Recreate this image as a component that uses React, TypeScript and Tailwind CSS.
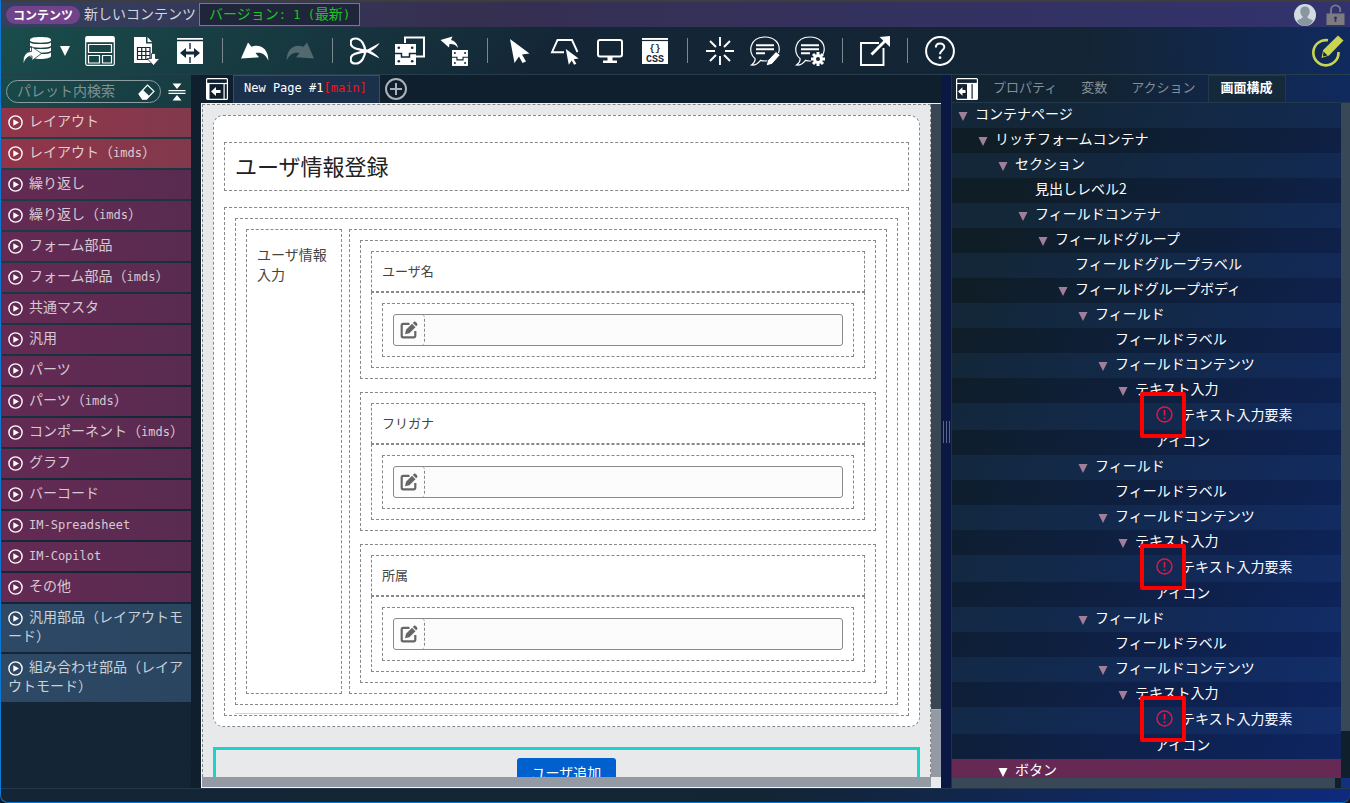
import React, { ReactNode } from "react";

const DARK = "#14283a";

/* ---------- toolbar drawings ---------- */

function Icon({ children }: { children: ReactNode }) {
  return (
    <svg viewBox="0 0 30 30" className="size-[30px] shrink-0" fill="currentColor" aria-hidden="true">
      {children}
    </svg>
  );
}

const RepositoryIcon = () => (
  <Icon>
    <path d="M7 3.500C7 .2 28 .2 28 3.500V20c0 4-21 4-21 0z" />
    <g fill="none" stroke="#194240" strokeWidth="1.300">
      <path d="M7 5.500c2 2.600 19 2.600 21 0" />
      <path d="M7 10.500c2 2.600 19 2.600 21 0" />
      <path d="M7 15.500c2 2.600 19 2.600 21 0" />
    </g>
    <path
      d="M.5 28.500C-1 20 3 15.500 8.500 15.500V10.500l10 7-9.500 7v-4.500C5 20 2.500 22 .5 28.500z"
      stroke="#194240"
      strokeWidth=".8"
    />
  </Icon>
);

const LayoutIcon = () => (
  <Icon>
    <rect x=".7" y=".7" width="28.600" height="28.600" rx="1.500" fill="none" stroke="currentColor" strokeWidth="1.200" />
    <path d="M1 1h28v5.200H1z" />
    <g fill="none" stroke="currentColor" strokeWidth="1.200">
      <path d="M3.500 8.500h23v8h-23zM3.500 19.500h11v7.500h-11zM17.500 19.500h9v7.500h-9z" />
    </g>
  </Icon>
);

const SheetIcon = () => (
  <Icon>
    <path d="M4 1h12v6.500h6V27H4z" />
    <path d="M17.500 1L22 6h-4.500z" />
    <path d="M7.500 11.500h12.500v12H7.500zM7.500 15.500H20M7.500 19.500H20M11.700 11.500v12M15.800 11.500v12" fill="none" stroke={DARK} strokeWidth="1.200" />
    <path d="M21.500 17.500h4v5h4.300L23.500 29.500l-6.300-7h4.300z" stroke={DARK} strokeWidth=".8" />
  </Icon>
);

const WidthIcon = () => (
  <Icon>
    <path d="M2 2h26v26H2z" />
    <path d="M2 4.500h26M15 7v6M15 21v6" stroke={DARK} strokeWidth="1.400" />
    <path d="M5 17l6-5v3.500h8V12l6 5-6 5v-3.500h-8V22z" fill={DARK} />
  </Icon>
);

const UndoPath = () => <path d="M1 22.500L8 6.500l3.500 4.200C21 7.500 28.500 13.500 28.300 24.500 25.500 17.500 20.500 15.800 15.500 17l3.500 4.300z" />;

const UndoIcon = () => (
  <Icon>
    <UndoPath />
  </Icon>
);

const RedoIcon = () => (
  <Icon>
    <g transform="translate(30 0) scale(-1 1)">
      <UndoPath />
    </g>
  </Icon>
);

const ScissorsIcon = () => (
  <Icon>
    <g fill="none" stroke="currentColor" strokeWidth="2.200">
      <path d="M15.500 16.500C15 9 11.500 2.500 5.500 2.500-1 2.500-.5 10 4.500 12c3.500 1.500 7 1.500 11 3.500" />
      <path d="M15.500 13.500C15 21 11.500 27.500 5.500 27.500c-6.500 0-6-7.500-1-9.500 3.500-1.500 7-1.500 11-3.500" />
    </g>
    <path d="M12 13l5.500.5L29.500 7c-1 2.500-5 6-9 8 4 2 8 5.500 9 7.500L17.500 16.500 12 17z" />
  </Icon>
);

const Part = () => (
  <g>
    <path d="M0 0h21v21H0z" />
    <g fill={DARK}>
      <circle cx="3.800" cy="3.800" r="1.300" />
      <circle cx="17.200" cy="3.800" r="1.300" />
      <circle cx="3.800" cy="17.200" r="1.300" />
      <circle cx="17.200" cy="17.200" r="1.300" />
    </g>
    <path d="M0 9.500h6.500v3.500h8V9.500H21" fill="none" stroke={DARK} strokeWidth="1.500" />
  </g>
);

const CopyIcon = () => (
  <Icon>
    <path d="M10 7V1.500h19v19h-8" fill="none" stroke="currentColor" strokeWidth="2" />
    <g transform="translate(0 8)">
      <Part />
    </g>
  </Icon>
);

const PasteIcon = () => (
  <Icon>
    <path d="M.5 4L12.500.5 11 4c4 1 6.500 4 7 8C15.500 8.500 13 7.800 9.500 8L9 11.500z" />
    <g transform="translate(12 14) scale(.76)">
      <Part />
    </g>
  </Icon>
);

const Pointer = () => <path d="M5 3l19.500 14.500-7.500 1 4 7L17.500 27 14 20.500 9.500 27z" />;

const PointerIcon = () => (
  <Icon>
    <Pointer />
  </Icon>
);

const AreaPointerIcon = () => (
  <Icon>
    <path d="M14 16.200H2L7.500 4h14.500l5.500 12" fill="none" stroke="currentColor" strokeWidth="1.900" />
    <g transform="translate(12.500 11) scale(.66)">
      <Pointer />
    </g>
  </Icon>
);

const MonitorIcon = () => (
  <Icon>
    <rect x="3" y="4" width="24" height="16.500" rx="2" fill="none" stroke="currentColor" strokeWidth="2" />
    <path d="M12.500 20h5v4.500H22V27H8v-2.500h4.500z" />
  </Icon>
);

const CssIcon = () => (
  <Icon>
    <path d="M2 2h26v26H2z" />
    <path d="M2 4.500h26" stroke={DARK} strokeWidth="1.200" />
    <text x="15" y="14.500" textAnchor="middle" fontSize="9" fontWeight="700" fontFamily="Liberation Mono" fill={DARK}>
      {"{}"}
    </text>
    <text x="15" y="25.800" textAnchor="middle" fontSize="10" fontWeight="700" fontFamily="Liberation Mono" fill={DARK}>
      CSS
    </text>
  </Icon>
);

const BurstIcon = () => (
  <Icon>
    <path
      d="M15 1v9M15 20v9M1 15h9M20 15h9M5 5l6 6M19 19l6 6M25 5l-6 6M11 19l-6 6"
      fill="none"
      stroke="currentColor"
      strokeWidth="1.900"
    />
  </Icon>
);

const Balloon = () => (
  <g fill="none" stroke="currentColor">
    <path d="M5 22.500C-2.500 17-.5 1 15 1c19 0 19 24 0 24-1.500 0-3-.3-4.500-.7C8 27.500 5 29.500 1.500 29c2.500-1.800 4-4 3.500-6.500z" strokeWidth="1.200" />
    <path d="M6 9.200h18M6 13.200h18M6 17.200h9" strokeWidth="2" />
  </g>
);

const CommentEditIcon = () => (
  <Icon>
    <Balloon />
    <path d="M16 30l1.500-5.500L26 15.500l4.300 3.500-8.300 9.300z" stroke={DARK} strokeWidth="1" />
  </Icon>
);

const CommentGearIcon = () => (
  <Icon>
    <Balloon />
    <circle cx="23" cy="23" r="7.500" fill={DARK} />
    <path d="M23 16v14M16 23h14M18 18l10 10M28 18L18 28" stroke="currentColor" strokeWidth="3" />
    <circle cx="23" cy="23" r="4.800" />
    <circle cx="23" cy="23" r="2" fill={DARK} />
  </Icon>
);

const OpenIcon = () => (
  <Icon>
    <path d="M19 7H1v22h22.500V12" fill="none" stroke="currentColor" strokeWidth="1.900" />
    <path d="M11.500 18.500L25 5" stroke="currentColor" strokeWidth="2.800" />
    <path d="M30 0v11L19.500 1z" />
  </Icon>
);

const HelpIcon = () => (
  <Icon>
    <circle cx="15" cy="15" r="13.900" fill="none" stroke="currentColor" strokeWidth="2" />
    <path d="M10.800 11.500c.2-5.500 8.700-5 8.500-.2-.2 3-4.300 3.200-4.300 7" fill="none" stroke="currentColor" strokeWidth="2" />
    <circle cx="15" cy="21.700" r="1.400" />
  </Icon>
);

const EditModeIcon = () => (
  <svg viewBox="0 0 34 34" className="size-[34px]" aria-hidden="true">
    <path d="M17 6.300A12.600 12.600 0 1 0 27.500 18" fill="none" stroke="#c9d550" strokeWidth="2.600" />
    <path d="M10.500 24l1.700-8L27 1.500l5.500 5L18 21.500z" fill="#c9d550" />
    <path d="M12.500 17.500l4 4-4.500 1z" fill="#14283a" />
  </svg>
);

const PanelIcon = ({ side }: { side: "left" | "right" }) => (
  <svg viewBox="0 0 22 22" className="size-[22px] text-white" fill="currentColor" aria-hidden="true">
    <rect x=".6" y=".6" width="20.800" height="20.800" rx="1" fill="none" stroke="currentColor" strokeWidth="1.200" />
    <path d="M1 5.500h20" stroke="currentColor" strokeWidth="1.200" />
    {side === "left" ? (
      <path d="M1 5h2.500v16H1zM17.500 5h1.200v16h-1.200z" />
    ) : (
      <path d="M11 5h4.500v16H11zM16.700 5H21v16h-4.300z" />
    )}
    <path
      d={
        side === "left"
          ? "M5 13.500l5-4.500v3h4.500v3H10v3z"
          : "M2 13.500l4.500-4.200V12H9.500v3h-3v2.700z"
      }
    />
  </svg>
);

/* ---------- shared pieces ---------- */

function Mixed({ text }: { text: string }) {
  const parts = text.split(/([A-Za-z][A-Za-z-]*)/);
  return (
    <>
      {parts.map((p, i) =>
        i % 2 === 1 ? (
          <span key={i} className="font-['DejaVu_Sans_Mono',monospace] text-xs leading-none">
            {p}
          </span>
        ) : (
          p
        )
      )}
    </>
  );
}

const Separator = () => <span className="mx-[2px] h-[25px] w-px bg-[#7c8890]" />;

function Tool({ label, disabled, children }: { label: string; disabled?: boolean; children: ReactNode }) {
  return (
    <button type="button" aria-label={label} disabled={disabled} className="flex items-center disabled:opacity-25">
      {children}
    </button>
  );
}

/* ---------- header and toolbar ---------- */

function Header() {
  return (
    <header className="flex h-[27px] shrink-0 items-center border-t-2 border-[#3d3d3d] bg-linear-to-r from-[#35405f] via-[#352f50] via-35% to-[#32336e] px-[5px]">
      <span className="rounded-full bg-[#71438a] px-[7px] text-xs leading-[18px] font-bold text-white">コンテンツ</span>
      <h1 className="ml-[4px] pb-1 text-sm leading-5 text-[#d3d6df]">新しいコンテンツ</h1>
      <span className="ml-[3px] border border-[#1fb82c] bg-[#20263a] px-[9px] pb-[3px] text-sm leading-[18px] text-[#17c824]">
        バージョン<span className="font-['DejaVu_Sans_Mono',monospace] text-xs leading-none">: 1 (</span>最新
        <span className="font-['DejaVu_Sans_Mono',monospace] text-xs leading-none">)</span>
      </span>
      <div className="ml-auto flex items-center gap-[10px]">
        <svg viewBox="0 0 22 22" className="size-[22px]" aria-hidden="true">
          <circle cx="11" cy="11" r="11" fill="#d3dbe1" />
          <path d="M11 2.500c3.200 0 4.700 2.200 4.700 5 0 2-.9 3.800-2.200 4.800v1.500l5.500 2.700c-1.500 3.300-4.700 5.500-8 5.500s-6.500-2.200-8-5.500l5.500-2.700v-1.500C7.200 11.300 6.300 9.500 6.300 7.500c0-2.800 1.500-5 4.700-5z" fill="#8796a0" />
        </svg>
        <svg viewBox="0 0 19 22" className="h-[22px] w-[19px]" aria-hidden="true">
          <path d="M5 10V6a4.600 4.600 0 0 1 9.200 0v2" fill="none" stroke="#7c7c80" strokeWidth="1.800" />
          <path d="M.5 9.500h18V21H.5z" fill="#7c7c80" />
          <path d="M9.500 12.500a1.500 1.500 0 0 1 .8 2.800V18H8.700v-2.700a1.500 1.500 0 0 1 .8-2.800z" fill="#32336e" />
        </svg>
      </div>
    </header>
  );
}

function Toolbar() {
  return (
    <div className="flex h-12 shrink-0 items-center gap-[15px] border-b border-[#243e4b] bg-linear-to-r from-[#102a5e]/0 from-80% to-[#102a5e] pr-[5px] pl-[22px] text-white">
      <button type="button" aria-label="リポジトリ" className="flex items-center gap-[7px]">
        <RepositoryIcon />
        <svg viewBox="0 0 10 10" className="size-[10px]" fill="currentColor" aria-hidden="true">
          <path d="M0 0h10L5 10z" />
        </svg>
      </button>
      <Tool label="レイアウト"><LayoutIcon /></Tool>
      <Tool label="シート"><SheetIcon /></Tool>
      <Tool label="幅"><WidthIcon /></Tool>
      <Separator />
      <Tool label="元に戻す"><UndoIcon /></Tool>
      <Tool label="やり直し" disabled><RedoIcon /></Tool>
      <Separator />
      <Tool label="切り取り"><ScissorsIcon /></Tool>
      <Tool label="コピー"><CopyIcon /></Tool>
      <Tool label="貼り付け"><PasteIcon /></Tool>
      <Separator />
      <Tool label="選択"><PointerIcon /></Tool>
      <Tool label="範囲選択"><AreaPointerIcon /></Tool>
      <Tool label="プレビュー"><MonitorIcon /></Tool>
      <Tool label="スタイルシート"><CssIcon /></Tool>
      <Separator />
      <Tool label="強調"><BurstIcon /></Tool>
      <Tool label="コメント編集"><CommentEditIcon /></Tool>
      <Tool label="コメント設定"><CommentGearIcon /></Tool>
      <Separator />
      <Tool label="別画面で開く"><OpenIcon /></Tool>
      <Separator />
      <Tool label="ヘルプ"><HelpIcon /></Tool>
      <button type="button" aria-label="編集モード" className="ml-auto">
        <EditModeIcon />
      </button>
    </div>
  );
}

/* ---------- palette ---------- */

const palette: { name: string; tone: "red" | "purple" | "blue" }[] = [
  { name: "レイアウト", tone: "red" },
  { name: "レイアウト（imds）", tone: "red" },
  { name: "繰り返し", tone: "purple" },
  { name: "繰り返し（imds）", tone: "purple" },
  { name: "フォーム部品", tone: "purple" },
  { name: "フォーム部品（imds）", tone: "purple" },
  { name: "共通マスタ", tone: "purple" },
  { name: "汎用", tone: "purple" },
  { name: "パーツ", tone: "purple" },
  { name: "パーツ（imds）", tone: "purple" },
  { name: "コンポーネント（imds）", tone: "purple" },
  { name: "グラフ", tone: "purple" },
  { name: "バーコード", tone: "purple" },
  { name: "IM-Spreadsheet", tone: "purple" },
  { name: "IM-Copilot", tone: "purple" },
  { name: "その他", tone: "purple" },
  { name: "汎用部品（レイアウトモード）", tone: "blue" },
  { name: "組み合わせ部品（レイアウトモード）", tone: "blue" },
];

const tones = {
  red: "bg-linear-to-r from-[#92344a] to-[#81394c]",
  purple: "bg-linear-to-r from-[#642a54] to-[#592b51]",
  blue: "bg-linear-to-r from-[#2d4966] to-[#2a4560]",
};

function Palette() {
  return (
    <aside className="flex w-[190px] shrink-0 flex-col">
      <div className="flex h-[33px] shrink-0 items-center gap-[7px] pl-[5px]">
        <div className="flex h-[23px] w-[155px] items-center rounded-full border border-[#8b9da2] pr-[5px] pl-[10px]">
          <input
            aria-label="パレット内検索"
            placeholder="パレット内検索"
            className="min-w-0 flex-1 bg-transparent pb-1 text-sm leading-5 text-white outline-none placeholder:text-[#7f9195]"
          />
          <button type="button" aria-label="クリア" className="text-white">
            <svg viewBox="0 0 17 16" className="h-4 w-[17px]" fill="currentColor" aria-hidden="true">
              <path d="M1 10L9.500 1l6.500 6.200-7.500 8H4.500z" fill="none" stroke="currentColor" strokeWidth="1.200" />
              <path d="M1 10l4-4 6.500 6.200-3 3H4.500z" />
            </svg>
          </button>
        </div>
        <button type="button" aria-label="すべて閉じる" className="text-white">
          <svg viewBox="0 0 18 18" className="size-[18px]" fill="currentColor" aria-hidden="true">
            <path d="M4.500.5h9L9 6zM4.500 17.500h9L9 12zM.5 7h17v1.300H.5zM.5 9.800h17v1.300H.5z" />
          </svg>
        </button>
      </div>
      <nav className="flex flex-col gap-[2px]">
        {palette.map((p) => (
          <button
            key={p.name}
            type="button"
            className={`pt-[3px] pr-1 pb-[7px] pl-[7px] text-left text-sm leading-[19px] text-white/75 [line-break:anywhere] ${tones[p.tone]}`}
          >
            <svg viewBox="0 0 15 15" className="-my-1 mr-[6px] inline-block size-[15px] text-white" aria-hidden="true">
              <circle cx="7.500" cy="7.500" r="6.600" fill="none" stroke="currentColor" strokeWidth="1.400" />
              <path d="M5.300 4.300L11 7.500l-5.700 3.200z" fill="currentColor" />
            </svg>
            <Mixed text={p.name} />
          </button>
        ))}
      </nav>
    </aside>
  );
}

/* ---------- canvas ---------- */

const box = "border border-dashed border-[#888888]";

function Field({ id, label }: { id: string; label: string }) {
  return (
    <div className={`${box} p-[10px]`}>
      <div className={`${box} flex h-[41px] items-center px-[10px] pb-[2px]`}>
        <label htmlFor={id} className="text-[13px] leading-5 text-[#444444]">
          {label}
        </label>
      </div>
      <div className={`${box} p-[10px]`}>
        <div className={`${box} p-[10px]`}>
          <div className="flex h-8 rounded-[3px] border border-[#8a8a8a] bg-[#fcfcfc]">
            <span className="flex w-[31px] shrink-0 items-center justify-center rounded-[3px] border-r border-dashed border-[#888888]">
              <svg viewBox="0 0 18 18" className="size-[18px]" aria-hidden="true">
                <path d="M9.500 2.800H3.200a1.500 1.500 0 0 0-1.500 1.500v10.500a1.500 1.500 0 0 0 1.500 1.500h10.600a1.500 1.500 0 0 0 1.500-1.500V10" fill="none" stroke="#666666" strokeWidth="2.200" />
                <path d="M5 13.200l1-4.400L12 2.700l3.500 3.500-6.100 6zM12.800 2l1.200-1.200c1-1 4.200 2.300 3.300 3.300L16.200 5.300z" fill="#666666" />
              </svg>
            </span>
            <input id={id} className="min-w-0 flex-1 bg-transparent px-2 text-sm outline-none" />
          </div>
        </div>
      </div>
    </div>
  );
}

function Canvas() {
  return (
    <div className="flex min-h-0 flex-1 flex-col border-y border-l border-[#f2f4f6] bg-[#e8e9eb]">
      <div className="flex min-h-0 flex-1">
        <div className={`${box} min-w-0 flex-1 overflow-hidden border-b-0 p-[10px]`}>
          <form className={`${box} flex flex-col gap-4 rounded-[10px] bg-white px-[10px] pt-[26px] pb-[10px]`}>
            <div className={`${box} px-[10px] pb-[2px]`}>
              <h2 className="text-[22px] leading-[45px] text-[#222222]">ユーザ情報登録</h2>
            </div>
            <section className={`${box} px-[10px] pt-[10px] pb-px`}>
              <div className={`${box} flex gap-[7px] p-[10px]`}>
                <div className={`${box} w-24 shrink-0 px-[10px] pt-[14px] text-sm leading-5 text-[#444444]`}>ユーザ情報入力</div>
                <div className={`${box} flex min-w-0 flex-1 flex-col gap-[13px] p-[10px]`}>
                  <Field id="user-name" label="ユーザ名" />
                  <Field id="user-kana" label="フリガナ" />
                  <Field id="user-group" label="所属" />
                </div>
              </div>
              <hr className="mt-2 border-[#d2d2d2]" />
            </section>
          </form>
          <div className="mt-5 flex justify-center border-[3px] border-[#1bd3c6] pt-2 pb-4">
            <button type="button" className="rounded-[3px] bg-[#0060ce] px-[15px] pb-1 text-sm leading-7 text-white">
              ユーザ追加
            </button>
          </div>
        </div>
        <div className="flex w-[10px] shrink-0 flex-col bg-[#939aa3]">
          <div className="h-9/10 border-b border-[#a9b0b8] bg-[#394754]" />
        </div>
      </div>
      <div className="flex h-[10px] shrink-0">
        <div className="flex-1 bg-[#939aa3]" />
        <div className="w-[10px] bg-[#e8eaee]" />
      </div>
    </div>
  );
}

function Editor() {
  return (
    <main className="flex min-w-0 flex-1 flex-col bg-[#101f2e]">
      <div className="flex h-7 shrink-0 items-center pl-[5px]">
        <button type="button" aria-label="パレットを閉じる">
          <PanelIcon side="left" />
        </button>
        <div className="ml-[5px] h-full border border-b-0 border-[#37506a] bg-[#1b314b] pr-3 pl-[10px] font-['DejaVu_Sans_Mono',monospace] text-xs leading-[25px] text-white">
          New Page #1<span className="text-[#f5121c]">[main]</span>
        </div>
        <button type="button" aria-label="ページ追加" className="ml-[5px]">
          <svg viewBox="0 0 22 22" className="size-[22px]" fill="none" stroke="#abb1b8" strokeWidth="2" aria-hidden="true">
            <circle cx="11" cy="11" r="10" />
            <path d="M5 11h12M11 5v12" />
          </svg>
        </button>
      </div>
      <Canvas />
    </main>
  );
}

/* ---------- structure tree ---------- */

type Node = { name: string; depth: number; leaf?: boolean; error?: boolean; selected?: boolean };

const fieldNodes: Node[] = [
  { name: "フィールド", depth: 6 },
  { name: "フィールドラベル", depth: 7, leaf: true },
  { name: "フィールドコンテンツ", depth: 7 },
  { name: "テキスト入力", depth: 8 },
  { name: "テキスト入力要素", depth: 9, leaf: true, error: true },
  { name: "アイコン", depth: 9, leaf: true },
];

const nodes: Node[] = [
  { name: "コンテナページ", depth: 0 },
  { name: "リッチフォームコンテナ", depth: 1 },
  { name: "セクション", depth: 2 },
  { name: "見出しレベル2", depth: 3, leaf: true },
  { name: "フィールドコンテナ", depth: 3 },
  { name: "フィールドグループ", depth: 4 },
  { name: "フィールドグループラベル", depth: 5, leaf: true },
  { name: "フィールドグループボディ", depth: 5 },
  ...fieldNodes,
  ...fieldNodes,
  ...fieldNodes,
  { name: "ボタン", depth: 2, selected: true },
];

function TreeRow({ node, index }: { node: Node; index: number }) {
  const tone = node.selected ? "bg-[#652953]" : index % 2 === 0 ? "bg-[#1c4068]/20" : "bg-black/10";
  return (
    <li
      role="treeitem"
      aria-level={node.depth + 1}
      aria-selected={!!node.selected}
      className={`flex shrink-0 items-center pb-[5px] ${node.error ? "h-[27px]" : "h-[25px]"} ${tone}`}
      style={{ paddingLeft: 6 + node.depth * 20 }}
    >
      <span className="flex w-[17px] shrink-0 items-center">
        {!node.leaf && (
          <svg
            viewBox="0 0 10 9"
            className={`mt-[6px] h-[9px] w-[10px] ${node.selected ? "text-white" : "text-[#a17f9b]"}`}
            fill="currentColor"
            aria-hidden="true"
          >
            <path d="M.5 0h9L5 9z" />
          </svg>
        )}
      </span>
      {node.error && (
        <span className="relative mr-2 ml-px size-[17px] shrink-0">
          <svg viewBox="0 0 17 17" className="size-[17px]" fill="none" stroke="#d81b46" strokeWidth="1.500" aria-hidden="true">
            <circle cx="8.500" cy="8.500" r="7.500" />
            <path d="M8.500 4v5.500M8.500 11.300v1.700" strokeWidth="1.700" />
          </svg>
          <span className="absolute -top-[14px] -left-4 z-10 size-[46px] rounded-[2px] border-4 border-[#ff0000]" />
        </span>
      )}
      <span className="text-sm leading-5 whitespace-nowrap text-white">{node.name}</span>
    </li>
  );
}

const tabs = ["プロパティ", "変数", "アクション", "画面構成"];

function Inspector() {
  return (
    <aside className="flex w-[399px] shrink-0 flex-col border-l border-[#1d3246] bg-[#122331]">
      <div
        className="flex h-7 shrink-0 items-center border-b border-[#22384d] bg-linear-to-r from-[#102a5e]/0 from-35% to-[#102a5e] pl-1"
        role="tablist"
      >
        <button type="button" aria-label="パネルを開く" className="mr-[3px]">
          <PanelIcon side="right" />
        </button>
        {tabs.map((t, i) => (
          <button
            key={t}
            type="button"
            role="tab"
            aria-selected={i === 3}
            className={
              i === 3
                ? "h-full border-x border-t border-[#22384d] bg-[#14293a] px-3 pb-1 text-[13px] leading-5 font-bold text-white"
                : "h-full px-3 pb-1 text-[13px] leading-5 text-[#848e98]"
            }
          >
            {t}
          </button>
        ))}
      </div>
      <div className="flex min-h-0 flex-1">
        <ul
          role="tree"
          className="flex min-w-0 flex-1 flex-col overflow-hidden bg-[linear-gradient(115deg,#11212c_15%,#102556_70%,#0f2a6e_100%)]"
        >
          {nodes.map((n, i) => (
            <TreeRow key={i} node={n} index={i} />
          ))}
        </ul>
        <div className="w-[9px] shrink-0 bg-[#101f2c]">
          <div className="h-[93%] bg-[#394856]" />
        </div>
      </div>
      <div className="flex h-[10px] shrink-0">
        <div className="flex-1 bg-[#394856]" />
        <div className="w-[6px] bg-[#101f2c]" />
        <div className="w-[9px] bg-[#12307f]" />
      </div>
    </aside>
  );
}

export default function App() {
  return (
    <div
      lang="ja"
      className="h-screen overflow-hidden bg-[#101820] font-['Noto_Sans_CJK_JP',sans-serif]"
    >
      <div className="flex h-full flex-col overflow-hidden rounded-b-lg border-b border-l border-[#0a78d4] bg-[linear-gradient(135deg,#1a4f4c_0%,#142636_28%,#132432_72%,#0f2a7c_100%)]">
        <Header />
        <Toolbar />
        <div className="flex min-h-0 flex-1">
          <Palette />
          <div className="w-[10px] shrink-0 bg-[#101f2e]" />
          <Editor />
          <div className="flex w-[10px] shrink-0 items-center justify-center gap-[2px] bg-[#0a1843]">
            <span className="h-[22px] w-px bg-[#5a6684]" />
            <span className="h-[22px] w-px bg-[#5a6684]" />
            <span className="h-[22px] w-px bg-[#5a6684]" />
          </div>
          <Inspector />
        </div>
        <footer className="h-[14px] shrink-0 border-t border-[#22384d]" />
      </div>
    </div>
  );
}
